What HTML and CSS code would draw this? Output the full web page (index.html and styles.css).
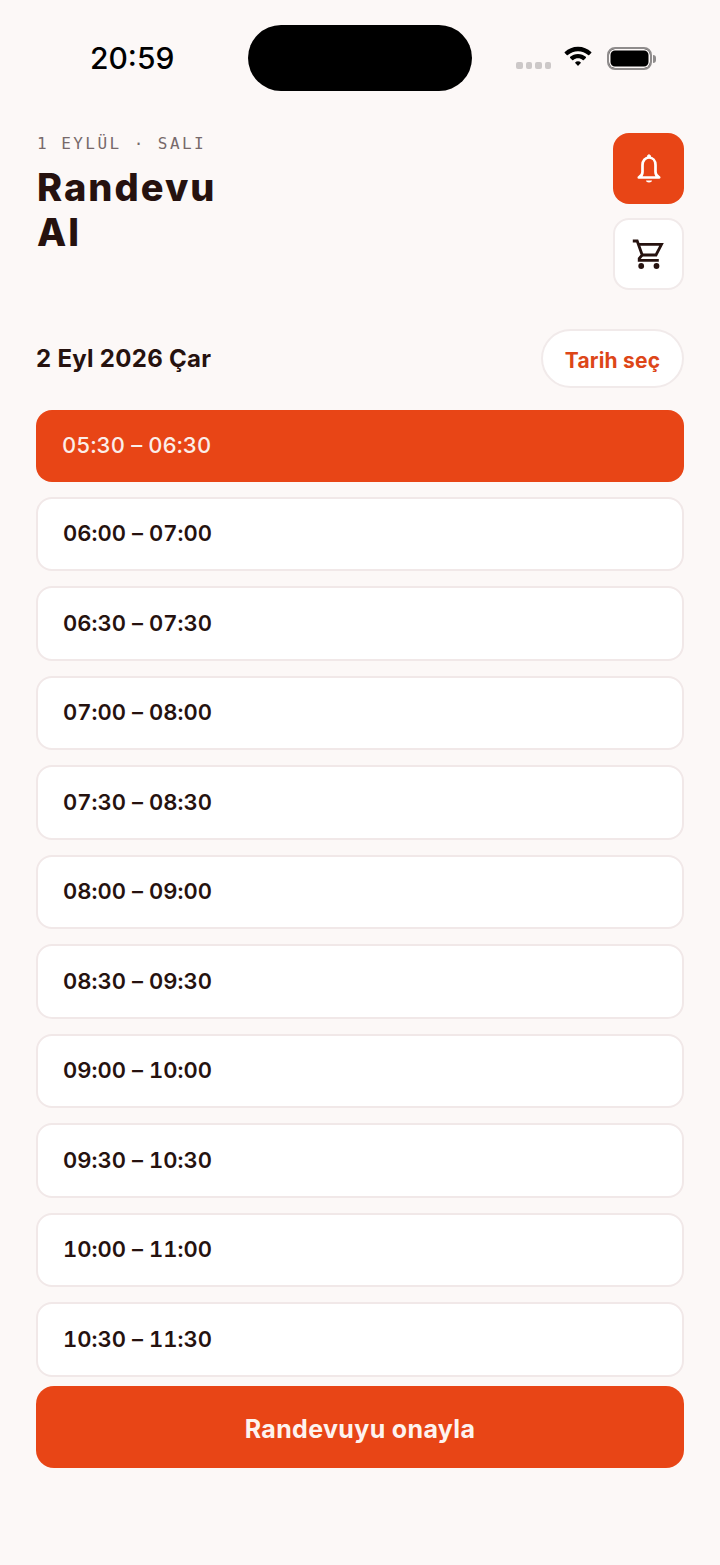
FILE: index.html
```html
<!DOCTYPE html>
<html lang="tr">
<head>
<meta charset="utf-8">
<title>Randevu Al</title>
<link rel="stylesheet" href="styles.css">
</head>
<body>
<div class="page">
  <div class="status">
    <div class="time">20:59</div>
    <div class="island"></div>
    <div class="sys">
      <div class="dots"><i></i><i></i><i></i><i></i></div>
      <svg class="wifi" width="34" height="25" viewBox="0 0 32 24"><path d="M16 3.500c5 0 9.300 1.900 12.700 5.100a.8.800 0 0 1 0 1.100l-1.900 1.900a.8.800 0 0 1-1.100 0C23 9.300 19.700 7.900 16 7.900S9 9.300 6.300 11.600a.8.800 0 0 1-1.100 0L3.300 9.700a.8.800 0 0 1 0-1.100C6.700 5.400 11 3.500 16 3.500z"/><path d="M16 10.500c2.900 0 5.500 1 7.500 2.800a.8.800 0 0 1 0 1.100l-1.900 1.900a.8.800 0 0 1-1.100 0c-1.200-1-2.800-1.600-4.500-1.600s-3.300.6-4.500 1.600a.8.800 0 0 1-1.100 0l-1.900-1.900a.8.800 0 0 1 0-1.100c2-1.800 4.600-2.800 7.500-2.800z"/><path d="M16 17.600c1.100 0 2 .4 2.700 1 .2.200.2.500 0 .7l-2.300 2.400a.5.500 0 0 1-.8 0l-2.300-2.400a.5.500 0 0 1 0-.7c.7-.6 1.600-1 2.700-1z"/></svg>
      <div class="battery"><div class="cell"></div><div class="cap"></div></div>
    </div>
  </div>

  <header class="head">
    <div class="head-text">
      <div class="eyebrow">1 EYLÜL · SALI</div>
      <h1 class="title">Randevu<br>Al</h1>
    </div>
    <div class="head-actions">
      <button class="icon-btn icon-btn-on" aria-label="Bildirimler">
        <svg width="30" height="34" viewBox="0 0 30 34" fill="none" stroke="#fff" stroke-width="2.700" stroke-linejoin="round" stroke-linecap="round"><circle cx="15" cy="4.300" r="1.500" fill="#fff" stroke-width="1"/><path d="M4.800 25.500c2-1 3.700-3 3.700-5.500v-7c0-4.500 2.800-7.500 6.500-7.500s6.500 3 6.500 7.500v7c0 2.500 1.700 4.500 3.700 5.500z"/><path d="M12 28.500h6c0 1.200-1.300 2-3 2s-3-.8-3-2z" fill="#fff" stroke="none"/></svg>
      </button>
      <button class="icon-btn" aria-label="Sepet">
        <svg width="34" height="34" viewBox="0 0 34 34" fill="none" stroke="#26120f" stroke-width="2.800" stroke-linejoin="miter"><path d="M.8 4h4.400l5 14-3 3.500v1.800h19.600"/><path d="M6.500 7.300h23L24 18H10.200"/><circle cx="9.200" cy="29" r="2.900" fill="#26120f" stroke="none"/><circle cx="24.500" cy="29" r="2.900" fill="#26120f" stroke="none"/></svg>
      </button>
    </div>
  </header>

  <div class="date-row">
    <div class="date">2 Eyl 2026 Çar</div>
    <button class="pick">Tarih seç</button>
  </div>

  <div class="slots">
    <div class="slot slot-on">05:30 – 06:30</div>
    <div class="slot">06:00 – 07:00</div>
    <div class="slot">06:30 – 07:30</div>
    <div class="slot">07:00 – 08:00</div>
    <div class="slot">07:30 – 08:30</div>
    <div class="slot">08:00 – 09:00</div>
    <div class="slot">08:30 – 09:30</div>
    <div class="slot">09:00 – 10:00</div>
    <div class="slot">09:30 – 10:30</div>
    <div class="slot">10:00 – 11:00</div>
    <div class="slot">10:30 – 11:30</div>
  </div>

  <button class="confirm">Randevuyu onayla</button>
</div>
</body>
</html>
```
FILE: styles.css
```css
* { box-sizing: border-box; }
html, body { margin: 0; padding: 0; }
body {
  background: #fcf8f7;
  font-family: Inter, "Liberation Sans", sans-serif;
  color: #26120f;
}
.page { width: 720px; height: 1565px; padding: 25px 36px 0; overflow: hidden; }
button { font: inherit; cursor: pointer; }

.status { display: flex; align-items: flex-start; height: 66px; margin: 0 -36px; }
.time {
  width: 248px; height: 66px; padding-left: 90px;
  font-weight: 500; font-size: 30px; line-height: 66px; color: #000;
}
.island { width: 224px; height: 66px; border-radius: 33px; background: #000; }
.sys { display: flex; align-items: center; padding: 19px 0 0 44px; }
.dots { display: flex; gap: 3px; margin-top: 17px; }
.dots i { display: block; width: 6.500px; height: 6.500px; border-radius: 2px; background: #ccc8c8; }
.wifi { margin-left: 10px; margin-top: -3px; }
.battery { display: flex; align-items: center; margin-left: 12px; margin-top: 3px; }
.cell { width: 45px; height: 23px; border: 2px solid #8f8c8c; border-radius: 8px; background: #000; box-shadow: inset 0 0 0 1.500px #fcf8f7; }
.cap { width: 3px; height: 8px; background: #8f8c8c; border-radius: 0 3px 3px 0; margin-left: 1px; }

.head { display: flex; justify-content: space-between; margin-top: 42px; }
.head-text { padding-left: 1px; }
.eyebrow {
  font-family: "DejaVu Sans Mono", monospace; font-size: 16px; line-height: 20px;
  letter-spacing: 2.450px; color: #77696a; margin-top: 1px;
}
.title { margin: 11px 0 0 0; font-size: 38px; line-height: 45px; font-weight: 800; letter-spacing: 2px; color: #26120f; }
.head-actions { display: flex; flex-direction: column; gap: 14px; }
.icon-btn {
  width: 71px; height: 72px; border-radius: 16px; border: 2px solid #f1eaea; background: #fff;
  display: flex; align-items: center; justify-content: center; padding: 0;
}
.icon-btn-on { background: #e84516; border: 0; height: 71px; }

.date-row { display: flex; justify-content: space-between; align-items: center; margin-top: 38.500px; height: 60px; }
.date { font-size: 24px; font-weight: 700; letter-spacing: .3px; color: #26120f; margin-top: -1px; }
.pick {
  width: 143px; height: 59px; border-radius: 30px; border: 2px solid #f1eaea; background: #fff;
  color: #dd4618; font-size: 21px; font-weight: 700; letter-spacing: .2px; padding: 3px 0 0;
}

.slots { display: flex; flex-direction: column; gap: 15px; margin-top: 21.500px; }
.slot {
  height: 74.500px; border: 2px solid #f1e8e8; border-radius: 16px; background: #fff;
  display: flex; align-items: center; padding: 0 0 1.500px 25px;
  font-size: 22px; font-weight: 600; font-variant-numeric: tabular-nums; letter-spacing: .05px; color: #26120f;
}
.slot-on {
  height: 71.500px; border: 0; background: #e84516; color: #fbeee9; font-weight: 500; padding-left: 26px;
}
.confirm {
  display: block; width: 648px; height: 82px; margin-top: 9.500px; border: 0; border-radius: 18px;
  background: #e84516; color: #fdf3ef; font-size: 25px; font-weight: 700; letter-spacing: .35px; text-align: center; padding: 3px 0 0;
}
```
